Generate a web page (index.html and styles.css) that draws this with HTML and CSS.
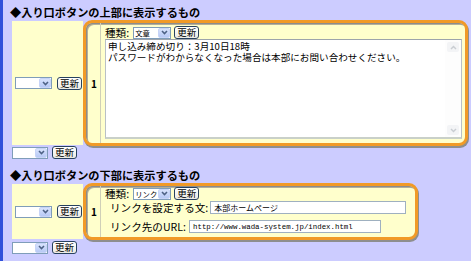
FILE: index.html
```html
<!DOCTYPE html>
<html>
<head>
<meta charset="utf-8">
<link rel="stylesheet" href="styles.css">
</head>
<body>
<div class="page">
  <h2 class="heading">◆入り口ボタンの上部に表示するもの</h2>
  <div class="table table-wide">
    <div class="ctrl-cell">
      <span class="sel"><span class="sel-val"></span><span class="sel-btn"><svg width="7" height="5" viewBox="0 0 7 5"><path d="M1 1 L3.5 3.6 L6 1" stroke="#4d6185" stroke-width="1.5" fill="none"/></svg></span></span>
      <span class="btn">更新</span>
    </div>
    <div class="box">
      <div class="num">1</div>
      <div class="content">
        <div class="line">
          <span class="lbl">種類:</span>
          <span class="sel sel-type"><span class="sel-val">文章</span><span class="sel-btn"><svg width="7" height="5" viewBox="0 0 7 5"><path d="M1 1 L3.5 3.6 L6 1" stroke="#4d6185" stroke-width="1.5" fill="none"/></svg></span></span>
          <span class="btn">更新</span>
        </div>
        <div class="textarea">
          <div class="ta-text">申し込み締め切り：3月10日18時<br>パスワードがわからなくなった場合は本部にお問い合わせください。</div>
          <div class="scroll">
            <span class="arrow"><svg width="7" height="5" viewBox="0 0 7 5"><path d="M1 4 L3.5 1.4 L6 4" stroke="#c9cdd2" stroke-width="1.4" fill="none"/></svg></span>
            <span class="arrow"><svg width="7" height="5" viewBox="0 0 7 5"><path d="M1 1 L3.5 3.6 L6 1" stroke="#c9cdd2" stroke-width="1.4" fill="none"/></svg></span>
          </div>
        </div>
      </div>
    </div>
  </div>
  <div class="after">
    <span class="sel sel-small"><span class="sel-val"></span><span class="sel-btn"><svg width="7" height="5" viewBox="0 0 7 5"><path d="M1 1 L3.5 3.6 L6 1" stroke="#4d6185" stroke-width="1.5" fill="none"/></svg></span></span>
    <span class="btn">更新</span>
  </div>

  <h2 class="heading heading-2">◆入り口ボタンの下部に表示するもの</h2>
  <div class="table table-narrow">
    <div class="ctrl-cell">
      <span class="sel"><span class="sel-val"></span><span class="sel-btn"><svg width="7" height="5" viewBox="0 0 7 5"><path d="M1 1 L3.5 3.6 L6 1" stroke="#4d6185" stroke-width="1.5" fill="none"/></svg></span></span>
      <span class="btn">更新</span>
    </div>
    <div class="box box-link">
      <div class="num">1</div>
      <div class="content">
        <div class="line">
          <span class="lbl">種類:</span>
          <span class="sel sel-type"><span class="sel-val">リンク</span><span class="sel-btn"><svg width="7" height="5" viewBox="0 0 7 5"><path d="M1 1 L3.5 3.6 L6 1" stroke="#4d6185" stroke-width="1.5" fill="none"/></svg></span></span>
          <span class="btn">更新</span>
        </div>
        <div class="line line-field">
          <span class="lbl lbl-indent">リンクを設定する文:</span>
          <span class="input input-text">本部ホームページ</span>
        </div>
        <div class="line line-field line-url">
          <span class="lbl lbl-indent">リンク先のURL:</span>
          <span class="input input-url">http://www.wada-system.jp/index.html</span>
        </div>
      </div>
    </div>
  </div>
  <div class="after after-2">
    <span class="sel sel-small"><span class="sel-val"></span><span class="sel-btn"><svg width="7" height="5" viewBox="0 0 7 5"><path d="M1 1 L3.5 3.6 L6 1" stroke="#4d6185" stroke-width="1.5" fill="none"/></svg></span></span>
    <span class="btn">更新</span>
  </div>
</div>
</body>
</html>
```

FILE: styles.css
```css
* { box-sizing: border-box; }
html, body { margin: 0; padding: 0; }
body {
  background: #ccccff;
  font-family: "Noto Sans CJK JP", "Noto Sans", sans-serif;
  color: #000;
}
.page {
  min-height: 261px;
  border-left: 3px solid #2f50da;
  padding: 5px 0 0 7px;
}
.heading {
  margin: 0;
  height: 15px;
  font-size: 11.2px;
  line-height: 15px;
  font-weight: bold;
  white-space: nowrap;
}
.heading-2 { margin-top: 9px; }

.table {
  display: flex;
  margin-left: 2px;
}
.table-wide { width: 456px; height: 126px; }
.table-narrow { width: 406px; height: 57px; }

.ctrl-cell {
  width: 71px;
  flex: none;
  background: #ffffcc;
  display: flex;
  align-items: center;
  gap: 5px;
  padding-left: 3px;
  margin: 1px 0 1px;
}

.box {
  flex: 1;
  display: flex;
  background: #ffffcc;
  border: 3px solid #f19a27;
  border-radius: 9px;
  box-shadow: inset 1px 1px 0 #8c8c8c, inset 2px 2px 0 #b4b09a, 1px 2px 0 #8e8e8e;
}
.num {
  width: 15px;
  flex: none;
  border-right: 1px solid #cfcfb8;
  display: flex;
  align-items: center;
  padding-left: 5px;
  font-size: 10px;
  font-weight: bold;
}
.content {
  flex: 1;
  padding: 3px 3px 4px 3px;
  display: flex;
  flex-direction: column;
}
.box-link .content { padding-top: 1px; }

.line {
  display: flex;
  align-items: center;
  height: 13px;
}
.line-field { margin-top: 1px; }
.line-url { margin-top: 6px; }
.lbl {
  font-size: 10.6px;
  line-height: 13px;
  height: 13px;
  padding-left: 1px;
  white-space: nowrap;
}
.lbl-indent { padding-left: 6px; }

.sel {
  display: inline-flex;
  width: 37px;
  height: 12px;
  border: 1px solid #7f9db9;
  background: #fff;
  flex: none;
}
.sel-type { width: 38px; margin-left: 4px; margin-right: 3px; }
.sel-small { width: 36px; }
.sel-val {
  flex: 1;
  font-size: 7.4px;
  line-height: 10px;
  padding-left: 1px;
  white-space: nowrap;
}
.sel-btn {
  width: 12px;
  flex: none;
  background: linear-gradient(#d8e3fd, #b7c9f5);
  border: 1px solid #c7d4f7;
  border-radius: 2px;
  display: flex;
  align-items: center;
  justify-content: center;
}
.sel-btn svg { display: block; }

.btn {
  display: inline-flex;
  align-items: center;
  justify-content: center;
  width: 25px;
  height: 13px;
  flex: none;
  border: 1px solid #27415f;
  border-radius: 3px;
  background: linear-gradient(#ffffff, #ecebe4);
  font-size: 9.5px;
  line-height: 11px;
}

.textarea {
  display: flex;
  height: 100px;
  margin-left: 1px;
  background: #fff;
  border: 1px solid #b9c0c6;
  border-top-color: #9da4ab;
  border-bottom: 2px solid #c9d0c9;
}
.ta-text {
  flex: 1;
  padding: 1px 0 0 2px;
  font-size: 9.6px;
  line-height: 11px;
  white-space: nowrap;
}
.scroll {
  width: 16px;
  flex: none;
  display: flex;
  flex-direction: column;
  justify-content: space-between;
  align-items: center;
  padding: 2px 0;
  background: #fdfdfd;
}
.arrow {
  width: 12px;
  height: 10px;
  display: flex;
  align-items: center;
  justify-content: center;
  background: #f3f4f6;
  border-radius: 2px;
}
.arrow svg { display: block; }

.input {
  display: flex;
  align-items: center;
  height: 13px;
  background: #fff;
  border: 1px solid #9fb0c0;
  padding-left: 3px;
  white-space: nowrap;
  overflow: hidden;
  flex: none;
}
.input-text {
  width: 196px;
  margin-left: 2px;
  font-size: 8px;
}
.input-url {
  width: 192px;
  margin-left: 3px;
  font-family: "Liberation Mono", "DejaVu Sans Mono", monospace;
  font-size: 7.4px;
}

.after {
  display: flex;
  align-items: center;
  gap: 4px;
  margin-left: 2px;
  height: 13px;
}
.after-2 { margin-top: 1px; }
```
